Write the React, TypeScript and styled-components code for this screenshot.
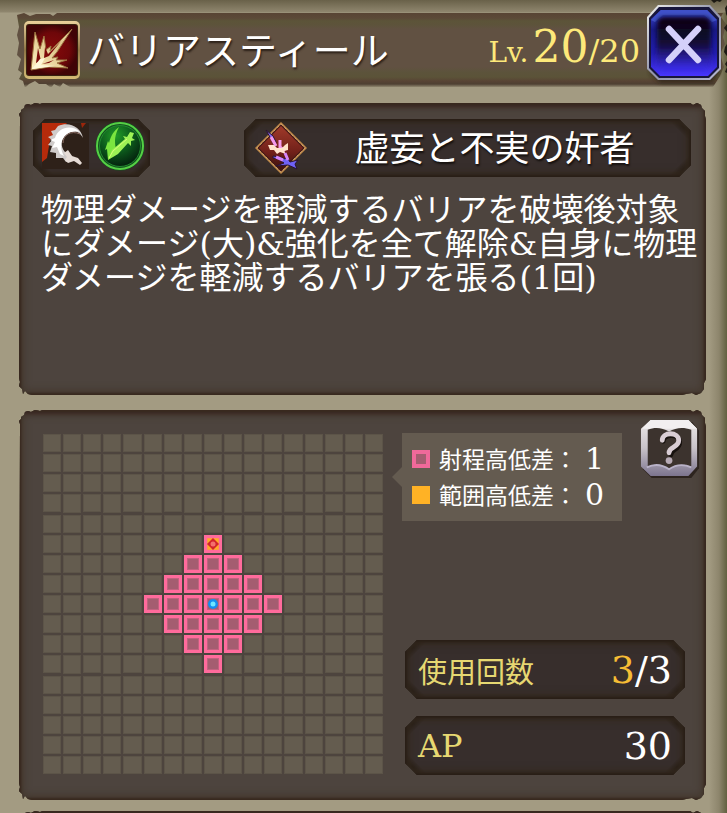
import React from 'react';
import styled, { createGlobalStyle, css } from 'styled-components';

const GlobalStyle = createGlobalStyle`
  * { box-sizing: border-box; }
  body {
    margin: 0;
    background: #a39b82;
    color: #fff;
    font-family: "DejaVu Serif", "Noto Sans CJK JP", serif;
  }
  h1, h2, p, dl, dd, dt, ul { margin: 0; padding: 0; font-weight: 400; }
`;

const jp = css`
  font-family: "Noto Sans CJK JP", sans-serif;
`;

const tornEdge = css`
  clip-path: polygon(
    1px 14px, 0 11px, 2px 9px, 2px 7px, 5px 5px, 6px 2px, 9px 1px, 12px 2px, 16px 0, 21px 1px, 24px 0,
    calc(100% - 16px) 0, calc(100% - 13px) 2px, calc(100% - 9px) 0, calc(100% - 5px) 2px,
    calc(100% - 4px) 5px, calc(100% - 1px) 8px, calc(100% - 1px) 13px, 100% 17px,
    100% calc(100% - 16px), calc(100% - 2px) calc(100% - 12px), calc(100% - 2px) calc(100% - 6px),
    calc(100% - 5px) calc(100% - 2px), calc(100% - 10px) 100%, calc(100% - 14px) calc(100% - 2px),
    calc(100% - 20px) calc(100% - 1px), calc(100% - 24px) 100%,
    13px 100%, 9px calc(100% - 1px), 6px calc(100% - 4px), 4px calc(100% - 1px),
    3px calc(100% - 6px), 0 calc(100% - 9px), 1px calc(100% - 13px), 0 calc(100% - 17px)
  );
`;

const Screen = styled.main`
  min-height: 100vh;
  overflow: hidden;
  display: flex;
  flex-direction: column;
  padding: 13px 21px 0 19px;
  background:
    linear-gradient(to bottom, #696149 0, #8f866e 12px, transparent 13px),
    linear-gradient(to right, transparent calc(100% - 18px), #8d856c calc(100% - 8px), #62603f 100%),
    #a39b82;
`;

const Header = styled.header`
  position: relative;
  isolation: isolate;
  display: flex;
  align-items: center;
  height: 74px;
  margin: 0 -21px 16px -3px;
  padding: 0 5px 0 7px;
  &::before {
    content: "";
    position: absolute;
    inset: 0;
    z-index: -1;
    background: linear-gradient(
      to bottom,
      #584434 0, #5b4937 5px, #5c5439 8px, #5d533b 12px, #615142 16px,
      #615142 54px, #5c533b 59px, #5b5338 64px, #584434 68px, #4e4032 71px, #8f866e 74px
    );
    clip-path: polygon(
      1px 2px, 8px 0, 14px 3px, 20px 1px, 34px 1px, 37px 3px, 41px 0,
      calc(100% - 4px) 0, calc(100% - 6px) 4px, calc(100% - 1px) 11px, calc(100% - 4px) 24px,
      calc(100% - 2px) 31px, calc(100% - 7px) 41px, calc(100% - 3px) 54px, calc(100% - 7px) 63px, calc(100% - 14px) 100%,
      54px 100%, 47px 70px, 44px 74px, 38px 71px, 35px 75px, 30px 71px, 23px 71px, 19px 68px,
      13px 71px, 9px 75px, 7px 68px, 3px 66px, 6px 60px, 2px 57px, 5px 46px, 1px 42px, 3px 30px, 1px 22px, 3px 14px
    );
  }
`;

const EdgeInk = styled.svg`
  position: absolute;
  top: -13px;
  right: 0;
  width: 16px;
  height: 76px;
`;

const SkillIcon = styled.svg`
  flex: none;
  width: 58px;
  height: 60px;
`;

const Title = styled.h1`
  ${jp}
  flex: 1;
  margin-left: 6px;
  padding-bottom: 4px;
  font-size: 38px;
  line-height: 48px;
  white-space: nowrap;
  text-shadow: 1px 2px 2px #2b2018;
`;

const Level = styled.p`
  display: flex;
  align-items: baseline;
  color: #fde97a;
  font-size: 32px;
  line-height: 50px;
`;

const LevelLabel = styled.span`
  font-size: 28px;
`;

const LevelNow = styled.strong`
  margin-left: 4px;
  font-size: 44px;
  font-weight: 400;
`;

const IconButton = styled.button<{ $w: number; $h: number }>`
  flex: none;
  display: block;
  width: ${(p) => p.$w}px;
  height: ${(p) => p.$h}px;
  padding: 0;
  border: 0;
  background: none;
  cursor: pointer;
  svg { display: block; width: 100%; height: 100%; }
`;

const CloseButton = styled(IconButton)`
  margin: 0 0 10px 6px;
`;

const Panel = styled.section<{ $minHeight: number }>`
  flex: none;
  min-height: ${(p) => p.$minHeight}px;
  background: #4d443e;
  box-shadow:
    inset 0 0 2px 2px #38291f,
    inset 0 4px 4px #3a2823,
    inset 0 0 9px 4px #42362b;
  ${tornEdge}
`;

const SkillPanel = styled(Panel)`
  padding: 16px 0 0 14px;
  margin-bottom: 15px;
`;

const RangePanel = styled(Panel)`
  display: grid;
  grid-template-columns: minmax(0, 340px) minmax(0, 1fr);
  column-gap: 19px;
  padding: 8px 6px 25px 24px;
  margin-bottom: 11px;
`;

const plate = css`
  display: flex;
  align-items: center;
  background:
    linear-gradient(135deg, #261d15 11px, transparent 17px),
    linear-gradient(225deg, #261d15 11px, transparent 17px),
    linear-gradient(45deg, #261d15 11px, transparent 17px),
    linear-gradient(315deg, #261d15 11px, transparent 17px),
    #372e2c;
  box-shadow: inset 0 0 3px 2px #281e15, inset 0 0 7px 5px #352a20;
  clip-path: polygon(
    12px 0, calc(100% - 12px) 0, 100% 12px, 100% calc(100% - 12px),
    calc(100% - 12px) 100%, 12px 100%, 0 calc(100% - 12px), 0 12px
  );
`;

const TagRow = styled.div`
  display: flex;
  justify-content: space-between;
  padding-right: 15px;
`;

const Attributes = styled.div`
  ${plate}
  gap: 6px;
  height: 58px;
  padding: 0 5px 4px 9px;
  svg { display: block; flex: none; }
`;

const Owner = styled.div`
  ${plate}
  width: 447px;
  height: 58px;
  padding: 0 10px;
`;

const OwnerName = styled.h2`
  ${jp}
  flex: 1;
  padding-bottom: 4px;
  text-align: center;
  font-size: 35px;
  line-height: 48px;
  white-space: nowrap;
  text-shadow: 1px 2px 2px #15100d;
`;

const Description = styled.p`
  padding: 16px 0 0 8px;
  font-size: 32px;
  line-height: 34px;
  white-space: nowrap;
`;

const Board = styled.div`
  display: grid;
  grid-template-columns: repeat(17, minmax(0, 1fr));
  gap: 2px;
  margin-top: 16px;
  align-self: start;
`;

const Cell = styled.div<{ $kind: string }>`
  aspect-ratio: 1;
  display: grid;
  place-items: center;
  border: 1px solid #5c5448;
  background: #645c4f;
  ${(p) => p.$kind !== 'empty' && css`
    border: 3px solid #ff6b9c;
    background: ${p.$kind === 'target' ? '#ffad25' : '#a45d70'};
    box-shadow: inset 0 0 0 1px ${p.$kind === 'target' ? '#ff9a45' : '#c0637f'};
  `}
  svg { display: block; width: 12px; height: 12px; }
`;

const Side = styled.div`
  display: flex;
  flex-direction: column;
  justify-content: space-between;
`;

const SideTop = styled.div`
  display: flex;
  justify-content: space-between;
  align-items: flex-start;
`;

const Legend = styled.ul`
  position: relative;
  width: 220px;
  margin-top: 15px;
  padding: 8px 10px;
  list-style: none;
  background: #645b50;
  &::before {
    content: "";
    position: absolute;
    left: -10px;
    top: 34px;
    border: 10px solid transparent;
    border-left-width: 0;
    border-right-color: #645b50;
  }
`;

const LegendItem = styled.li`
  display: flex;
  align-items: center;
  height: 36px;
`;

const Swatch = styled.span<{ $range?: boolean }>`
  width: 18px;
  height: 18px;
  margin-right: 9px;
  background: ${(p) => (p.$range ? '#a45d70' : '#ffb225')};
  border: ${(p) => (p.$range ? '4px solid #f0699a' : '0')};
`;

const LegendLabel = styled.span`
  ${jp}
  padding-bottom: 2px;
  font-size: 23px;
  line-height: 32px;
  white-space: nowrap;
`;

const LegendValue = styled.span`
  flex: 1;
  text-align: center;
  font-size: 30px;
  line-height: 36px;
`;

const Stats = styled.dl`
  display: flex;
  flex-direction: column;
  gap: 17px;
  padding: 0 15px 0 3px;
`;

const Stat = styled.div`
  ${plate}
  justify-content: space-between;
  height: 59px;
  padding: 0 13px;
`;

const StatName = styled.dt<{ $latin?: boolean }>`
  color: #e6d872;
  font-size: ${(p) => (p.$latin ? 32 : 29)}px;
  line-height: 40px;
  ${(p) => !p.$latin && jp}
`;

const StatValue = styled.dd`
  font-size: 38px;
  line-height: 48px;
`;

const Remaining = styled.span`
  color: #f6bd35;
`;

const SlashBurstIcon = () => (
  <SkillIcon viewBox="0 0 58 60" aria-hidden="true">
    <defs>
      <radialGradient id="red">
        <stop offset="0" stopColor="#850a0a" />
        <stop offset="0.7" stopColor="#6e0709" />
        <stop offset="1" stopColor="#400406" />
      </radialGradient>
      <linearGradient id="gold" x1="0" y1="0" x2="0" y2="1">
        <stop offset="0" stopColor="#ead19a" />
        <stop offset="0.5" stopColor="#8e7445" />
        <stop offset="1" stopColor="#d5bb75" />
      </linearGradient>
      <linearGradient id="spark" x1="0" y1="1" x2="1" y2="0">
        <stop offset="0" stopColor="#fff3c4" />
        <stop offset="0.6" stopColor="#dcc287" />
        <stop offset="1" stopColor="#f0d8a8" />
      </linearGradient>
    </defs>
    <rect x="1" y="1" width="56" height="58" rx="5" fill="url(#gold)" />
    <rect x="3" y="4" width="52" height="52" rx="3" fill="#38210f" />
    <rect x="4" y="5" width="50" height="50" rx="2" fill="url(#red)" />
    <path d="M8 50 12 12l5 17 4-13 2 14 5-4-1 5L49 9 34 32l-5 6 6-1-2 3 11 0-10 3 11 5-19-1Z" fill="url(#spark)" stroke="#9c7440" strokeWidth="1" />
    <path d="m13 43 2-15 3 13ZM21 38l1-11 3 7 13-13-12 15ZM19 44l12-4-5 3Z" fill="#7d0c0a" />
    <path d="m9 49 8-10 5-1-4 7 14 1Z" fill="#fff8d9" />
  </SkillIcon>
);

const CloseIcon = () => (
  <svg viewBox="0 0 76 82" aria-hidden="true">
    <defs>
      <linearGradient id="blue" x1="0" y1="0" x2="0" y2="1">
        <stop offset="0" stopColor="#3d4ad2" />
        <stop offset="0.3" stopColor="#171885" />
        <stop offset="0.65" stopColor="#211cab" />
        <stop offset="1" stopColor="#4836ff" />
      </linearGradient>
      <linearGradient id="night" x1="0" y1="0" x2="0" y2="1">
        <stop offset="0" stopColor="#090310" />
        <stop offset="0.5" stopColor="#130b34" />
        <stop offset="1" stopColor="#3b2df0" />
      </linearGradient>
      <linearGradient id="steel" x1="0" y1="0" x2="1" y2="1">
        <stop offset="0" stopColor="#f0f0ee" />
        <stop offset="0.5" stopColor="#9294ab" />
        <stop offset="1" stopColor="#b5b6d1" />
      </linearGradient>
      <filter id="soft"><feGaussianBlur stdDeviation="2" /></filter>
    </defs>
    <path d="M14 8h52l8 10v50L66 79H14L4 70Z" fill="#2b2118" opacity=".7" filter="url(#soft)" />
    <path d="M12 1h52l11 12v52L64 76H12L1 65V13Z" fill="url(#steel)" />
    <path d="M13 3h50l10 11v50L63 74H13L3 64V14Z" fill="#18163c" />
    <path d="M15 6h46l10 10v47l-9 9H14l-9-9V15Z" fill="url(#blue)" />
    <path d="M15 6h46l10 10-5 2-8-7H17l-8 7-4-2Z" fill="#3f50c8" />
    <rect x="11" y="13" width="54" height="53" rx="7" fill="url(#night)" filter="url(#soft)" />
    <path d="m23 25 29 31M52 25 23 56" stroke="#d4d0fa" strokeWidth="6.5" strokeLinecap="round" />
  </svg>
);

const BladeIcon = () => (
  <svg width="47" height="46" viewBox="0 0 47 46" aria-hidden="true">
    <path d="M0 0h47v46H0Z" fill="#2e2119" />
    <path d="M0 0h25L8 17 5 35 0 39Z" fill="#b62b0b" />
    <path d="M39 0h5l-4 5Z" fill="#9b260b" />
    <path d="M41 15C39 4 27-2 16 3l-3 4-4 1 2 4-5 2 4 3-4 5 4 1-2 6 6 1 0 5 7 0 3 4 4-1 2-5-7-4c-6-7-4-17 5-20 6-2 10 1 13 6Z" fill="#cfcbca" />
    <path d="M38 9C30 1 16 4 13 15l-5 2 5 2-3 6 5-1 3 7 4 2C15 21 22 6 38 9Z" fill="#fff" />
    <path d="M38 11c-9-4-17 1-17 9" fill="none" stroke="#8d6f66" strokeWidth="1" />
    <path d="m22 30 4-3 4 6 6 2 4 5-2 2-6-4-6 2-3-3 2-3Z" fill="#e6dcd6" />
  </svg>
);

const SwordIcon = () => (
  <svg width="50" height="50" viewBox="0 0 50 50" aria-hidden="true">
    <defs>
      <radialGradient id="green" cx=".4" cy=".25" r=".8">
        <stop offset="0" stopColor="#219b27" />
        <stop offset="0.5" stopColor="#0c5a1c" />
        <stop offset="1" stopColor="#031a0c" />
      </radialGradient>
    </defs>
    <circle cx="25" cy="25" r="24.5" fill="#14501e" />
    <circle cx="25" cy="25" r="23" fill="none" stroke="#55cf45" strokeWidth="2" />
    <circle cx="25" cy="25" r="20.5" fill="url(#green)" stroke="#228b30" strokeWidth="1" />
    <path d="m13 39-1-11-2 1 3-9 1 2C16 14 19 10 24 6c-4 8-5 13-3 22Z" fill="#7be53f" />
    <path d="m13 39 4-10 13-11-2-3 4 1 3-5 4 1-2 5 3 2-4 1 0 5-3-3-10 11Z" fill="#9df255" />
    <path d="m14 37 4-7 14-12" fill="none" stroke="#d4ff76" strokeWidth="1" />
  </svg>
);

const CrestIcon = () => (
  <svg width="54" height="54" viewBox="0 0 54 54" aria-hidden="true">
    <defs>
      <linearGradient id="crest" x1="0" y1="0" x2="0" y2="1">
        <stop offset="0" stopColor="#a03a2a" />
        <stop offset="0.6" stopColor="#702019" />
        <stop offset="1" stopColor="#3a120e" />
      </linearGradient>
    </defs>
    <path d="m27 1 26 26-26 26L1 27Z" fill="#c28a49" />
    <path d="m27 3 24 24-24 24L3 27Z" fill="#471a16" stroke="#e0bc82" strokeWidth="1" strokeDasharray="1 1" />
    <path d="m27 5 22 22-22 22L5 27Z" fill="url(#crest)" />
    <path d="m12 9 7 6 3 6-1 5-4-8Z" fill="#8a6cf5" stroke="#2a1430" strokeWidth="1" />
    <path d="m17 16 5 9M26 19l0 7 5 4" fill="none" stroke="#f59aea" strokeWidth="3" />
    <path d="m14 24 6 0 3 3 5 0 3-3 3-2 0 7-4 1 2 3-6-2-3 2-3-4-4 0Z" fill="#ffe3cb" />
    <path d="m19 35 7 1 5 2 2-2 3 5 8-2-3 4 2 5-9-4-12 1 8-3-6-4-5-1Z" fill="#6f62f5" stroke="#2a1430" strokeWidth="1" />
    <path d="m22 36 7 3M31 32l3 7" fill="none" stroke="#d685f8" strokeWidth="3" />
  </svg>
);

const HelpIcon = () => (
  <svg viewBox="0 0 62 62" aria-hidden="true">
    <defs>
      <linearGradient id="silver" x1="0" y1="0" x2="0" y2="1">
        <stop offset="0" stopColor="#eeeae9" />
        <stop offset="0.5" stopColor="#c8c2c8" />
        <stop offset="1" stopColor="#7c748e" />
      </linearGradient>
    </defs>
    <path d="M12 3h42l7 9v39l-8 10H12L3 52V12Z" fill="#2d241f" />
    <path d="M11 1h39l9 9v39l-9 10H11L1 49V10Z" fill="url(#silver)" />
    <path d="M11 1h39l9 9H2Z" fill="#f2eff0" />
    <path d="M8 11c8-3 15-2 22 2 7-4 14-5 23-2v38c-9-3-16-2-23 3-7-5-14-6-22-3Z" fill="#3c332e" />
    <path d="M24 23c0-8 17-8 17 1 0 8-9 7-9 13" fill="none" stroke="#17110e" strokeWidth="5" strokeLinecap="round" />
    <path d="M23 22c0-9 17-9 17 0 0 8-10 6-10 13" fill="none" stroke="#d9cdd4" strokeWidth="5" strokeLinecap="round" />
    <circle cx="30" cy="43" r="3.5" fill="#b7aab5" />
    <path d="M7 50c8-4 16-3 23 2 7-5 14-6 23-2" fill="none" stroke="#b9b2c8" strokeWidth="2" />
  </svg>
);

const TargetMark = () => (
  <svg viewBox="0 0 12 12" aria-hidden="true">
    <path d="m6 0 6 6-6 6-6-6Z" fill="#d3242b" />
    <circle cx="6" cy="6" r="2.5" fill="#f5706d" />
  </svg>
);

const SelfMark = () => (
  <svg viewBox="0 0 12 12" aria-hidden="true">
    <circle cx="6" cy="6" r="5" fill="#168eee" />
    <circle cx="6" cy="6" r="2.5" fill="#6de7ff" />
  </svg>
);

const SIZE = 17;
const CENTER = 8;

const cells = Array.from({ length: SIZE * SIZE }, (_, i) => {
  const dx = (i % SIZE) - CENTER;
  const dy = Math.floor(i / SIZE) - CENTER;
  if (dx === 0 && dy === 0) return 'self';
  if (dx === 0 && dy === -3) return 'target';
  return Math.abs(dx) + Math.abs(dy) <= 3 ? 'range' : 'empty';
});

export default function App() {
  return (
    <>
      <GlobalStyle />
      <Screen>
        <Header>
          <EdgeInk viewBox="0 0 16 76" aria-hidden="true">
            <path
              d="M0 0h11l-2 2-3-1-3 2ZM16 5l-2 3 1 6 1 2ZM16 24l-3 4 3 4ZM16 44l-2 3-1 5 2 3 1 1ZM16 61l-2 3 2 3-2 5 2 1Z"
              fill="#1c1913"
            />
          </EdgeInk>
          <SlashBurstIcon />
          <Title>バリアスティール</Title>
          <Level>
            <LevelLabel>Lv.</LevelLabel>
            <LevelNow>20</LevelNow>/20
          </Level>
          <CloseButton $w={76} $h={82} type="button" aria-label="閉じる">
            <CloseIcon />
          </CloseButton>
        </Header>

        <SkillPanel $minHeight={292}>
          <TagRow>
            <Attributes>
              <BladeIcon />
              <SwordIcon />
            </Attributes>
            <Owner>
              <CrestIcon />
              <OwnerName>虚妄と不実の奸者</OwnerName>
            </Owner>
          </TagRow>
          <Description>
            物理ダメージを軽減するバリアを破壊後対象<br />
            にダメージ(大)&amp;強化を全て解除&amp;自身に物理<br />
            ダメージを軽減するバリアを張る(1回)
          </Description>
        </SkillPanel>

        <RangePanel $minHeight={390}>
          <Board role="img" aria-label="射程範囲">
            {cells.map((kind, i) => (
              <Cell key={i} $kind={kind}>
                {kind === 'target' && <TargetMark />}
                {kind === 'self' && <SelfMark />}
              </Cell>
            ))}
          </Board>
          <Side>
            <SideTop>
              <Legend>
                <LegendItem>
                  <Swatch $range />
                  <LegendLabel>射程高低差：</LegendLabel>
                  <LegendValue>1</LegendValue>
                </LegendItem>
                <LegendItem>
                  <Swatch />
                  <LegendLabel>範囲高低差：</LegendLabel>
                  <LegendValue>0</LegendValue>
                </LegendItem>
              </Legend>
              <IconButton $w={60} $h={62} type="button" aria-label="ヘルプ">
                <HelpIcon />
              </IconButton>
            </SideTop>
            <Stats>
              <Stat>
                <StatName>使用回数</StatName>
                <StatValue><Remaining>3</Remaining>/3</StatValue>
              </Stat>
              <Stat>
                <StatName $latin>AP</StatName>
                <StatValue>30</StatValue>
              </Stat>
            </Stats>
          </Side>
        </RangePanel>

        <Panel $minHeight={40} />
      </Screen>
    </>
  );
}
